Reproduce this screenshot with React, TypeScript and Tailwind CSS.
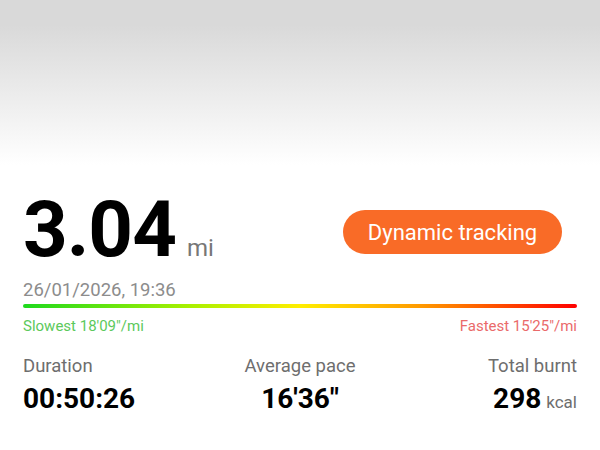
import React from "react";

export default function App() {
  return (
    <div className="w-[600px] h-[450px] bg-white overflow-hidden font-['Roboto',sans-serif]">
      <div className="h-[170px] bg-[linear-gradient(to_bottom,#d9d9d9_0px,#d9d9d9_25px,#ffffff_165px)]" />
      <div className="px-[23px]">
        <div className="flex items-center justify-between mt-[21px]">
          <div className="flex items-baseline">
            <span className="text-[78px] leading-none font-bold text-black tracking-[-1px]">3.04</span>
            <span className="ml-[11px] text-[24px] leading-none text-[#777777]">mi</span>
          </div>
          <div className="mr-[15px] mt-[4px] h-[44px] w-[219px] rounded-full bg-[#f96b27] flex items-center justify-center text-white text-[22px]">
            Dynamic tracking
          </div>
        </div>
        <div className="mt-[12px] text-[18.5px] leading-none text-[#8c8c8c]">26/01/2026, 19:36</div>
        <div className="mt-[4px] h-[4px] rounded-full bg-[linear-gradient(to_right,#1ed91e_0%,#a8f000_30%,#ffee00_50%,#ff9900_72%,#ff0000_100%)]" />
        <div className="mt-[11px] flex justify-between text-[15px] leading-none">
          <span className="text-[#5cc95c]">Slowest 18'09"/mi</span>
          <span className="text-[#ea6a6a]">Fastest 15'25"/mi</span>
        </div>
        <div className="mt-[23px] grid grid-cols-3">
          <div className="flex flex-col items-start">
            <span className="text-[18.5px] leading-none text-[#6e6e6e]">Duration</span>
            <span className="mt-[10px] text-[28px] leading-none font-bold text-black">00:50:26</span>
          </div>
          <div className="flex flex-col items-center">
            <span className="text-[18.5px] leading-none text-[#6e6e6e]">Average pace</span>
            <span className="mt-[10px] text-[28px] leading-none font-bold text-black">16'36"</span>
          </div>
          <div className="flex flex-col items-end">
            <span className="text-[18.5px] leading-none text-[#6e6e6e]">Total burnt</span>
            <span className="mt-[10px] leading-none">
              <span className="text-[28px] font-bold text-black">298</span>
              <span className="ml-[5px] text-[17px] text-[#6e6e6e]">kcal</span>
            </span>
          </div>
        </div>
      </div>
    </div>
  );
}
